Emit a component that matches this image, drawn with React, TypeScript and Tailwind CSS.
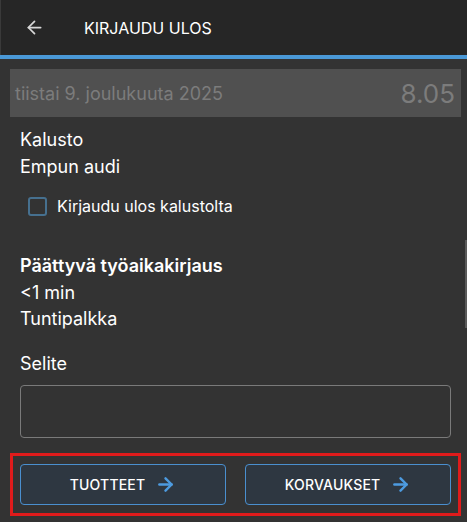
import { ArrowLeft, ArrowRight } from 'lucide-react';

function ActionButton({ label }: { label: string }) {
  return (
    <button className="flex-1 h-[41px] flex items-center justify-center gap-[10px] rounded-[4px] border border-[#4a8fcf] bg-[#2e3741] text-white text-[14px] font-medium tracking-[0.2px]">
      <span>{label}</span>
      <ArrowRight className="w-[21px] h-[21px] text-[#4d9be0]" strokeWidth={2.8} />
    </button>
  );
}

export default function App() {
  return (
    <div
      className="relative w-[467px] h-[522px] bg-[#333333] overflow-hidden text-white"
      style={{ fontFamily: 'Inter, "Noto Sans", sans-serif' }}
    >
      <header className="h-[55px] bg-[#262626] flex items-center border-l border-[#3a3a3a]">
        <ArrowLeft className="ml-[23px] w-[21px] h-[21px] text-[#d6d6d6]" strokeWidth={2} />
        <h1 className="ml-[39px] text-[16px] text-white">KIRJAUDU ULOS</h1>
      </header>
      <div className="h-[4px] bg-[#4a98d6]" />

      <div className="pl-[10px] pr-[6px] pt-[10px]">
        <div className="h-[48px] bg-[#505050] flex items-center justify-between pl-[5px] pr-[6px]">
          <span className="text-[18px] text-[#7c7c7c]">tiistai 9. joulukuuta 2025</span>
          <span className="text-[26px] text-[#7c7c7c]">8.05</span>
        </div>
      </div>

      <div className="pl-[20px] pr-[16px]">
        <div className="mt-[9px] text-[18px] leading-[27px]">Kalusto</div>
        <div className="text-[18px] leading-[27px]">Empun audi</div>

        <label className="flex items-center mt-[16px] ml-[8px] h-[20px]">
          <span className="w-[19px] h-[19px] rounded-[3px] border-2 border-[#46708f]" />
          <span className="ml-[10px] text-[16px]">Kirjaudu ulos kalustolta</span>
        </label>

        <div className="mt-[36px] text-[18px] font-semibold leading-[27px]">Päättyvä työaikakirjaus</div>
        <div className="text-[18px] leading-[27px]">&lt;1 min</div>
        <div className="text-[18px] leading-[26px]">Tuntipalkka</div>

        <div className="mt-[18px] text-[18px] leading-[27px]">Selite</div>
        <div className="mt-[8px] h-[53px] rounded-[4px] border-[1.5px] border-[#7a7a7a]" />
      </div>

      <div className="ml-[10px] mr-[6px] mt-[15px] border-[3px] border-[#e01b1b] px-[7px] py-[8px] flex gap-[19px]">
        <ActionButton label="TUOTTEET" />
        <ActionButton label="KORVAUKSET" />
      </div>

      <div className="absolute right-0 top-[240px] w-[2px] h-[88px] bg-[#5a5a5a]" />
    </div>
  );
}
